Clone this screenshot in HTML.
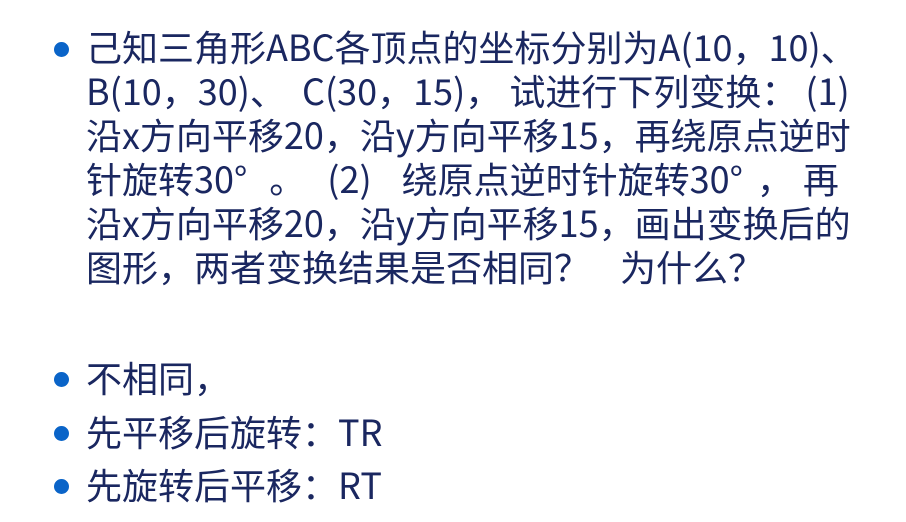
<!DOCTYPE html>
<html><head><meta charset="utf-8"><style>
html,body{margin:0;padding:0;background:#fff;width:906px;height:522px;overflow:hidden}
body{font-family:"Noto Sans CJK SC",sans-serif;color:#1a2760;font-size:36px}
.l{position:absolute;left:86px;white-space:pre;line-height:44px}
.b{position:absolute;width:15px;height:15px;border-radius:50%;background:#0a64c8;left:54px}
i{display:inline-block;font-style:normal}
</style></head><body>
<div class="b" style="top:42px"></div>
<div class="l" style="top:24px">己知三角形ABC各顶点的坐标分别为A(10，10)、</div>
<div class="l" style="top:68px">B(10，30)、  C(30，15)， 试进行下列变换： (1)</div>
<div class="l" style="top:112px">沿x方向平移20，沿y方向平移15，再绕原点逆时</div>
<div class="l" style="top:156px">针旋转30°<i style="width:22px"></i>。<i style="width:22px"></i>(2)<i style="width:30px"></i>绕原点逆时针旋转30°<i style="width:14px"></i>，<i style="width:10px"></i>再</div>
<div class="l" style="top:200px">沿x方向平移20，沿y方向平移15，画出变换后的</div>
<div class="l" style="top:244px">图形，两者变换结果是否相同？<i style="width:30px"></i>为什么？</div>
<div class="b" style="top:372px"></div>
<div class="l" style="top:355px">不相同，</div>
<div class="b" style="top:426px"></div>
<div class="l" style="top:409px">先平移后旋转：TR</div>
<div class="b" style="top:479px"></div>
<div class="l" style="top:462px">先旋转后平移：RT</div>
</body></html>
